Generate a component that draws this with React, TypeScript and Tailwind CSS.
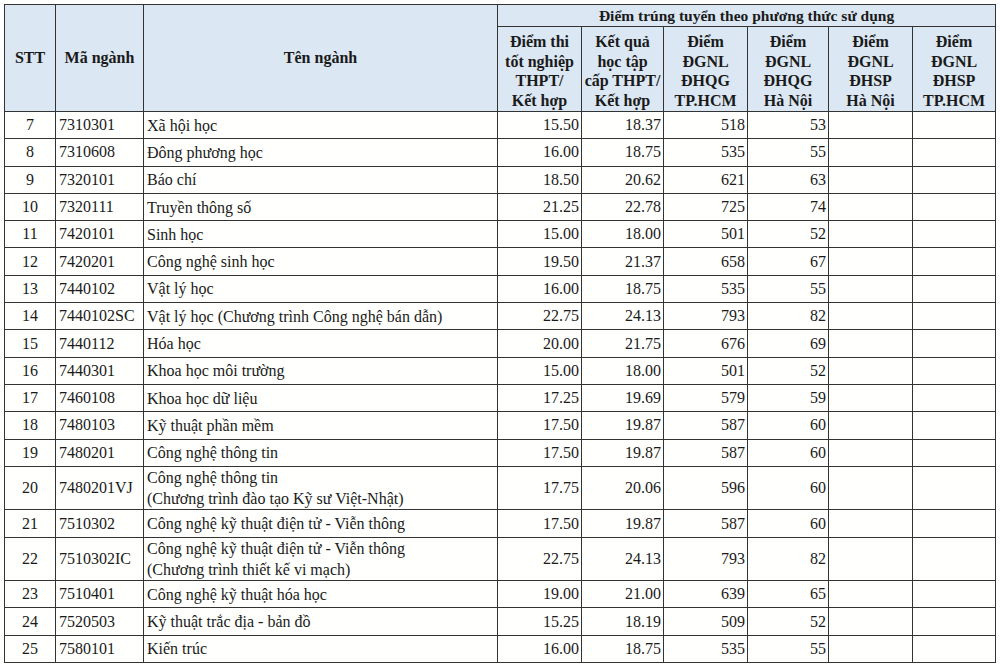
const rows: [string, string, string[], string, string, string, string][] = [
  ["7", "7310301", ["Xã hội học"], "15.50", "18.37", "518", "53"],
  ["8", "7310608", ["Đông phương học"], "16.00", "18.75", "535", "55"],
  ["9", "7320101", ["Báo chí"], "18.50", "20.62", "621", "63"],
  ["10", "7320111", ["Truyền thông số"], "21.25", "22.78", "725", "74"],
  ["11", "7420101", ["Sinh học"], "15.00", "18.00", "501", "52"],
  ["12", "7420201", ["Công nghệ sinh học"], "19.50", "21.37", "658", "67"],
  ["13", "7440102", ["Vật lý học"], "16.00", "18.75", "535", "55"],
  ["14", "7440102SC", ["Vật lý học (Chương trình Công nghệ bán dẫn)"], "22.75", "24.13", "793", "82"],
  ["15", "7440112", ["Hóa học"], "20.00", "21.75", "676", "69"],
  ["16", "7440301", ["Khoa học môi trường"], "15.00", "18.00", "501", "52"],
  ["17", "7460108", ["Khoa học dữ liệu"], "17.25", "19.69", "579", "59"],
  ["18", "7480103", ["Kỹ thuật phần mềm"], "17.50", "19.87", "587", "60"],
  ["19", "7480201", ["Công nghệ thông tin"], "17.50", "19.87", "587", "60"],
  ["20", "7480201VJ", ["Công nghệ thông tin", "(Chương trình đào tạo Kỹ sư Việt-Nhật)"], "17.75", "20.06", "596", "60"],
  ["21", "7510302", ["Công nghệ kỹ thuật điện tử - Viễn thông"], "17.50", "19.87", "587", "60"],
  ["22", "7510302IC", ["Công nghệ kỹ thuật điện tử - Viễn thông", "(Chương trình thiết kế vi mạch)"], "22.75", "24.13", "793", "82"],
  ["23", "7510401", ["Công nghệ kỹ thuật hóa học"], "19.00", "21.00", "639", "65"],
  ["24", "7520503", ["Kỹ thuật trắc địa - bản đồ"], "15.25", "18.19", "509", "52"],
  ["25", "7580101", ["Kiến trúc"], "16.00", "18.75", "535", "55"],
];

const subHeads = [
  ["Điểm thi", "tốt nghiệp", "THPT/", "Kết hợp"],
  ["Kết quả", "học tập", "cấp THPT/", "Kết hợp"],
  ["Điểm", "ĐGNL", "ĐHQG", "TP.HCM"],
  ["Điểm", "ĐGNL", "ĐHQG", "Hà Nội"],
  ["Điểm", "ĐGNL", "ĐHSP", "Hà Nội"],
  ["Điểm", "ĐGNL", "ĐHSP", "TP.HCM"],
];

const th = "border border-[#333] bg-[#dbe7f3] font-bold text-center align-middle";
const td = "border border-[#333] align-middle";

export default function App() {
  return (
    <div className="w-[1000px] h-[665px] bg-white pt-[4px] pl-[4px] font-['Liberation_Serif',serif] text-[#1a1a1a]">
      <table className="table-fixed border-collapse w-[991px] bg-[#fffffd]">
        <colgroup>
          <col className="w-[51px]" />
          <col className="w-[88px]" />
          <col className="w-[354px]" />
          <col className="w-[84px]" />
          <col className="w-[82px]" />
          <col className="w-[84px]" />
          <col className="w-[81px]" />
          <col className="w-[84px]" />
          <col className="w-[83px]" />
        </colgroup>
        <thead className="text-[16px]">
          <tr className="h-[22px]">
            <th rowSpan={2} className={th}>STT</th>
            <th rowSpan={2} className={th}>Mã ngành</th>
            <th rowSpan={2} className={th}>Tên ngành</th>
            <th colSpan={6} className={`${th} text-[15.5px] leading-[20px]`}>
              Điểm trúng tuyển theo phương thức sử dụng
            </th>
          </tr>
          <tr className="h-[85px]">
            {subHeads.map((lines, i) => (
              <th key={i} className={`${th} leading-[19.5px] px-0 pt-[4px] pb-0`}>
                {lines.map((l) => (
                  <div key={l}>{l}</div>
                ))}
              </th>
            ))}
          </tr>
        </thead>
        <tbody className="text-[16px]">
          {rows.map(([stt, code, name, a, b, c, d]) => (
            <tr key={stt} className={name.length > 1 ? "h-[43.5px]" : "h-[27.3px]"}>
              <td className={`${td} text-center`}>{stt}</td>
              <td className={`${td} pl-[3px]`}>{code}</td>
              <td className={`${td} pl-[3px] leading-[21px]`}>
                {name.map((n) => (
                  <div key={n}>{n}</div>
                ))}
              </td>
              <td className={`${td} text-right pr-[2px]`}>{a}</td>
              <td className={`${td} text-right pr-[2px]`}>{b}</td>
              <td className={`${td} text-right pr-[2px]`}>{c}</td>
              <td className={`${td} text-right pr-[2px]`}>{d}</td>
              <td className={td}></td>
              <td className={td}></td>
            </tr>
          ))}
        </tbody>
      </table>
    </div>
  );
}
